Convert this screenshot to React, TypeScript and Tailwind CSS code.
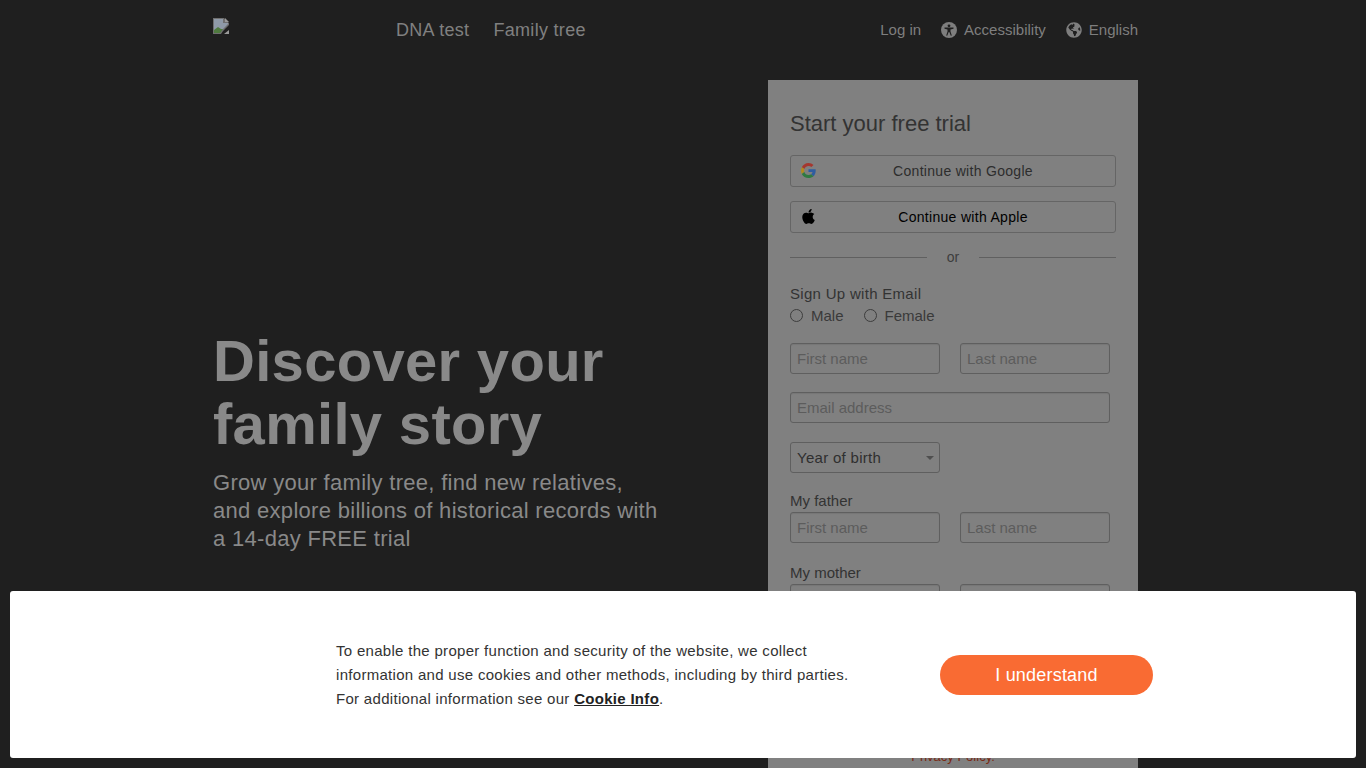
import { FaApple, FaGlobeAmericas } from 'react-icons/fa';

function GoogleIcon() {
  return (
    <svg viewBox="0 0 48 48" className="w-[15px] h-[15px]">
      <path fill="#a5372f" d="M24 9.500c3.500 0 6.700 1.200 9.200 3.600l6.900-6.900C35.900 2.400 30.500 0 24 0 14.600 0 6.500 5.400 2.600 13.200l8 6.200C12.500 13.700 17.800 9.500 24 9.500z" />
      <path fill="#2f5da0" d="M47 24.500c0-1.600-.1-3.100-.4-4.500H24v9h12.900c-.6 3-2.200 5.500-4.700 7.200l7.700 6C44.400 37.900 47 31.800 47 24.500z" />
      <path fill="#b08a1f" d="M10.500 28.600c-.5-1.400-.8-3-.8-4.600s.3-3.200.8-4.600l-8-6.200C.9 16.500 0 20.100 0 24s.9 7.500 2.600 10.800l7.900-6.200z" />
      <path fill="#2f7a42" d="M24 48c6.500 0 11.900-2.100 15.900-5.800l-7.700-6c-2.200 1.400-4.900 2.300-8.200 2.300-6.200 0-11.500-4.200-13.400-9.900l-8 6.200C6.500 42.600 14.600 48 24 48z" />
    </svg>
  );
}

function BrokenImage() {
  return (
    <svg viewBox="0 0 16 16" className="w-4 h-4">
      <path fill="#6f6f6f" d="M0 0h11l5 5v2l-3 3-3 3-2 3H0z" />
      <path fill="#8f9aa8" d="M1 1h9v4h5v1l-5 5-3 2-6 0z" />
      <path fill="#4f7a3f" d="M1 15v-3l4-3 3 2 2 0-3 4z" />
      <path fill="#9a9a9a" d="M12 0l4 4h-4zM16 12v4H11z" />
    </svg>
  );
}

function AccessibilityIcon() {
  return (
    <svg viewBox="0 0 16 16" className="w-4 h-4 ml-5 mr-[7px]">
      <circle cx="8" cy="8" r="8" fill="#7e7e7e" />
      <circle cx="8" cy="3.800" r="1.400" fill="#1f1f1f" />
      <path fill="#1f1f1f" d="M3.500 5.600h9v1.100L9.500 7.400v2.200l1.300 3.800-1 .3L8.300 10h-.6l-1.500 3.700-1-.3 1.300-3.800V7.400L3.500 6.700z" />
    </svg>
  );
}

function Field({ placeholder, wide }: { placeholder: string; wide?: boolean }) {
  return (
    <div
      className={`h-[31px] border border-[#5f5f5f] rounded-[3px] px-[6px] pt-px flex items-center text-[15px] text-[#5c5c5c] shadow-[inset_0_1px_1px_rgba(0,0,0,0.08)] ${wide ? 'w-[320px]' : 'w-[150px]'}`}
    >
      {placeholder}
    </div>
  );
}

function NameRow() {
  return (
    <div className="flex gap-5">
      <Field placeholder="First name" />
      <Field placeholder="Last name" />
    </div>
  );
}

function SocialButton({ icon, label, dark }: { icon: React.ReactNode; label: string; dark?: boolean }) {
  return (
    <div
      className={`relative h-8 border border-[#656565] rounded-[3px] pl-5 flex items-center justify-center text-sm tracking-[0.3px] ${dark ? 'text-black' : 'text-[#2d2d2d]'}`}
    >
      <span className="absolute left-[10px] top-[7px]">{icon}</span>
      <span>{label}</span>
    </div>
  );
}

function Radio({ label }: { label: string }) {
  return (
    <div className="flex items-center gap-[8px]">
      <span className="w-[13px] h-[13px] rounded-full border border-[#3d3d3d] bg-[#808080]" />
      <span className="pt-[2px]">{label}</span>
    </div>
  );
}

export default function App() {
  return (
    <div className="relative h-[768px] overflow-hidden bg-[#1f1f1f] font-['Liberation_Sans',Arial,sans-serif]">
      <div className="w-[925px] ml-[213px]">
        {/* Header */}
        <header className="h-[60px] flex items-center">
          <div className="w-[183px] -mt-[8px]">
            <BrokenImage />
          </div>
          <nav className="flex gap-6 text-lg tracking-[0.3px] text-[#808080]">
            <span>DNA test</span>
            <span>Family tree</span>
          </nav>
          <div className="ml-auto flex items-center text-[15px] text-[#7e7e7e]">
            <span>Log in</span>
            <AccessibilityIcon />
            <span>Accessibility</span>
            <FaGlobeAmericas className="w-4 h-4 ml-5 mr-[7px]" />
            <span>English</span>
          </div>
        </header>

        <main className="flex mt-5">
          {/* Hero */}
          <section className="w-[555px] pt-[249px]">
            <h1 className="text-[58px] leading-[63px] font-bold tracking-[0.3px] text-[#898989]">
              Discover your
              <br />
              family story
            </h1>
            <p className="mt-[14px] text-[22px] leading-7 tracking-[0.3px] text-[#898989]">
              Grow your family tree, find new relatives,
              <br />
              and explore billions of historical records with
              <br />a 14-day FREE trial
            </p>
          </section>

          {/* Signup card */}
          <section className="w-[370px] h-[760px] shrink-0 bg-[#808080] px-[22px] pt-[30px] text-[15px] text-[#333333]">
            <h2 className="text-[22px] leading-[27px] text-[#333333]">Start your free trial</h2>
            <div className="mt-[18px] flex flex-col gap-[14px]">
              <SocialButton icon={<GoogleIcon />} label="Continue with Google" />
              <SocialButton icon={<FaApple className="w-[17px] h-[17px] text-black -mt-[1px] -ml-[1px]" />} label="Continue with Apple" dark />
            </div>
            <div className="mt-[14px] h-[20px] flex items-center text-sm text-[#3d3d3d]">
              <div className="w-[137px] h-px bg-[#606060]" />
              <div className="flex-1 text-center">or</div>
              <div className="w-[137px] h-px bg-[#606060]" />
            </div>
            <div className="mt-[18px] leading-[18px] tracking-[0.3px]">Sign Up with Email</div>
            <div className="mt-[3px] h-[18px] flex items-center gap-[20px] text-[#3a3a3a]">
              <Radio label="Male" />
              <Radio label="Female" />
            </div>
            <div className="mt-[19px]">
              <NameRow />
            </div>
            <div className="mt-[18px]">
              <Field placeholder="Email address" wide />
            </div>
            <div className="mt-[19px] relative w-[150px] h-[31px] border border-[#5f5f5f] rounded-[3px] px-[6px] pt-px flex items-center tracking-[0.3px] text-[#2f2f2f]">
              <span>Year of birth</span>
              <span className="absolute right-[5px] top-[13px] border-x-4 border-x-transparent border-t-4 border-t-[#4f4f4f]" />
            </div>
            <div className="mt-[19px] leading-[18px]">My father</div>
            <div className="mt-[2px]">
              <NameRow />
            </div>
            <div className="mt-[21px] leading-[18px]">My mother</div>
            <div className="mt-[2px]">
              <NameRow />
            </div>
            <div className="mt-[134px] text-center text-[13px] leading-[16px] text-[#7a2a14]">Privacy Policy.</div>
          </section>
        </main>
      </div>

      {/* Cookie notice */}
      <div className="fixed left-[10px] right-[10px] top-[591px] h-[167px] bg-white rounded-[3px] flex items-center pl-[326px]">
        <p className="w-[530px] text-[15px] leading-6 tracking-[0.3px] text-[#333333]">
          To enable the proper function and security of the website, we collect
          <br />
          information and use cookies and other methods, including by third parties.
          <br />
          For additional information see our{' '}
          <a className="font-bold underline text-[#222222]">Cookie Info</a>.
        </p>
        <button className="ml-[74px] w-[213px] h-10 rounded-full bg-[#f96b33] text-white text-lg tracking-[0.2px]">I understand</button>
      </div>
    </div>
  );
}
